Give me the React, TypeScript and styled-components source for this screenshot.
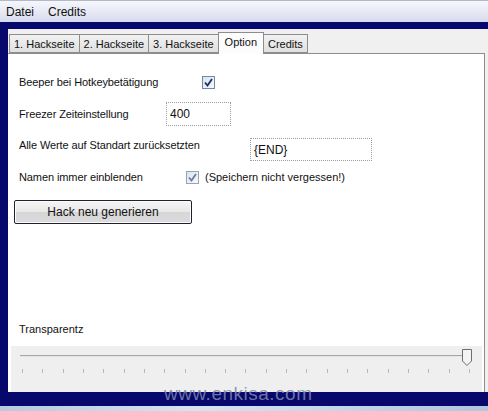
import styled, { createGlobalStyle } from 'styled-components';

const GlobalStyle = createGlobalStyle`
  html, body {
    margin: 0;
    padding: 0;
    background: #07076c;
  }
  * {
    box-sizing: border-box;
  }
`;

const Screen = styled.div`
  width: 488px;
  height: 411px;
  overflow: hidden;
  position: relative;
  display: flex;
  flex-direction: column;
  background: #07076c;
  font-family: 'Liberation Sans', Arial, sans-serif;
  color: #111;
`;

const MenuBar = styled.div`
  height: 22px;
  display: flex;
  align-items: center;
  gap: 14px;
  padding: 0 6px;
  border-top: 1px solid #b4b8c8;
  background: linear-gradient(#f6f7fc, #e4e6f2 60%, #d6daec);
  font-size: 12px;
`;

const MenuItem = styled.span`
  color: #111;
`;

const TitleBand = styled.div`
  height: 7px;
  background: #07076c;
`;

const Body = styled.div`
  flex: 1;
  display: flex;
  padding-left: 8px;
`;

const Client = styled.div`
  flex: 1;
  display: flex;
  flex-direction: column;
  background: #f0f0f0;
  padding: 2px 3px 0 0;
`;

const TabStrip = styled.div`
  display: flex;
  align-items: flex-end;
  height: 22px;
  padding-left: 1px;
  position: relative;
  z-index: 1;
`;

const Tab = styled.div<{ $active?: boolean }>`
  height: ${(p) => (p.$active ? '22px' : '19px')};
  padding: ${(p) => (p.$active ? '3px 6px 0' : '3px 4px 0')};
  margin-bottom: ${(p) => (p.$active ? '-1px' : '0')};
  font-size: 11px;
  border: 1px solid #8d8d8d;
  border-bottom: ${(p) => (p.$active ? 'none' : '1px solid #8d8d8d')};
  background: ${(p) =>
    p.$active ? '#fcfcfc' : 'linear-gradient(#f2f2f2, #e0e0e0)'};
  margin-right: -1px;
  white-space: nowrap;
`;

const Panel = styled.div`
  flex: 1;
  display: flex;
  flex-direction: column;
  background: #fff;
  border: 1px solid #8d8d8d;
  border-left: none;
  border-bottom: none;
  padding: 21px 0 0 11px;
`;

const Row = styled.div<{ $labelWidth: number; $top?: number; $alignStart?: boolean }>`
  display: flex;
  align-items: ${(p) => (p.$alignStart ? 'flex-start' : 'center')};
  margin-top: ${(p) => p.$top ?? 0}px;
  font-size: 11px;
  min-height: 14px;

  & > span:first-child {
    width: ${(p) => p.$labelWidth}px;
    flex-shrink: 0;
    line-height: 14px;
  }
`;

const Label = styled.span`
  letter-spacing: -0.1px;
`;

const Box = styled.div<{ $width: number; $height: number }>`
  width: ${(p) => p.$width}px;
  height: ${(p) => p.$height}px;
  border: 1px dotted #9e9e9e;
  padding: 4px 0 0 3px;
  font-size: 12px;
  background: #fff;
`;

const CheckBox = styled.div<{ $muted?: boolean }>`
  width: 13px;
  height: 13px;
  border: 1px solid ${(p) => (p.$muted ? '#9aa3b4' : '#6f8aa8')};
  background: linear-gradient(135deg, #d8e4f2, #f6f9fc);
  display: flex;
  align-items: center;
  justify-content: center;
`;

const Note = styled.span`
  margin-left: 6px;
  font-size: 11px;
`;

const Button = styled.button`
  margin: 16px 0 0 -5px;
  width: 178px;
  height: 24px;
  border: 1px solid #20202e;
  border-radius: 2px;
  box-shadow: inset 0 0 0 1px #fbfbfb;
  background: linear-gradient(#f4f4f4, #e8e8e8 50%, #d6d6d6 52%, #dcdcdc);
  font-family: 'Liberation Sans', Arial, sans-serif;
  font-size: 12px;
  color: #111;
  padding: 0;
`;

const Spacer = styled.div`
  flex: 1;
`;

const SliderLabel = styled.div`
  font-size: 11px;
  margin-bottom: 11px;
`;

const SliderBox = styled.div`
  position: relative;
  height: 46px;
  margin: 0 2px 0 -8px;
  background: #efefef;
  padding: 9px 8px 0 9px;
`;

const Track = styled.div`
  height: 2px;
  border-top: 1px solid #a7a7a7;
  border-bottom: 1px solid #e6e6e6;
  margin-right: 8px;
`;

const Thumb = styled.svg`
  position: absolute;
  right: 9px;
  top: 2px;
`;

const Ticks = styled.div`
  display: flex;
  justify-content: space-between;
  margin-top: 12px;
  padding: 0 4px 0 2px;
`;

const Tick = styled.i`
  display: block;
  width: 1px;
  height: 4px;
  background: #b8b8b8;
`;

const BottomBand = styled.div`
  height: 14px;
  background: #07076c;
`;

const BottomStrip = styled.div`
  height: 5px;
  background: linear-gradient(90deg, #b7c8e0, #d7e3f2 40%, #c4d4ea 70%, #b2c4de);
`;

const Watermark = styled.div`
  position: absolute;
  left: 164px;
  top: 383px;
  font-family: 'Liberation Sans', Arial, sans-serif;
  font-size: 19px;
  letter-spacing: 0.5px;
  color: rgba(128, 136, 172, 0.85);
  pointer-events: none;
`;

const Check = ({ muted }: { muted?: boolean }) => (
  <CheckBox $muted={muted}>
    <svg width="9" height="9" viewBox="0 0 9 9">
      <polyline
        points="1,4.5 3.5,7.5 8,1"
        fill="none"
        stroke={muted ? '#6d7c98' : '#1b2f66'}
        strokeWidth="1.8"
      />
    </svg>
  </CheckBox>
);

const tabs = ['1. Hackseite', '2. Hackseite', '3. Hackseite', 'Option', 'Credits'];

const App = () => {
  return (
    <Screen>
      <GlobalStyle />
      <MenuBar>
        <MenuItem>Datei</MenuItem>
        <MenuItem>Credits</MenuItem>
      </MenuBar>
      <TitleBand />
      <Body>
        <Client>
          <TabStrip>
            {tabs.map((t) => (
              <Tab key={t} $active={t === 'Option'}>
                {t}
              </Tab>
            ))}
          </TabStrip>
          <Panel>
            <Row $labelWidth={183}>
              <Label>Beeper bei Hotkeybetätigung</Label>
              <Check />
            </Row>
            <Row $labelWidth={147} $top={13}>
              <Label>Freezer Zeiteinstellung</Label>
              <Box $width={65} $height={24}>400</Box>
            </Row>
            <Row $labelWidth={231} $top={12} $alignStart>
              <Label>Alle Werte auf Standart zurücksetzten</Label>
              <Box $width={122} $height={23}>{'{END}'}</Box>
            </Row>
            <Row $labelWidth={167} $top={9}>
              <Label>Namen immer einblenden</Label>
              <Check muted />
              <Note>(Speichern nicht vergessen!)</Note>
            </Row>
            <Button>Hack neu generieren</Button>
            <Spacer />
            <SliderLabel>Transparentz</SliderLabel>
            <SliderBox>
              <Track />
              <Thumb width="12" height="19" viewBox="0 0 12 19">
                <path
                  d="M1.5 1.5 H10.5 V13 L6 17.5 L1.5 13 Z"
                  fill="#f4f4f4"
                  stroke="#6e6e6e"
                  strokeWidth="1"
                />
              </Thumb>
              <Ticks>
                {Array.from({ length: 23 }, (_, i) => (
                  <Tick key={i} />
                ))}
              </Ticks>
            </SliderBox>
          </Panel>
        </Client>
      </Body>
      <BottomBand />
      <BottomStrip />
      <Watermark>www.enkisa.com</Watermark>
    </Screen>
  );
};

export default App;
